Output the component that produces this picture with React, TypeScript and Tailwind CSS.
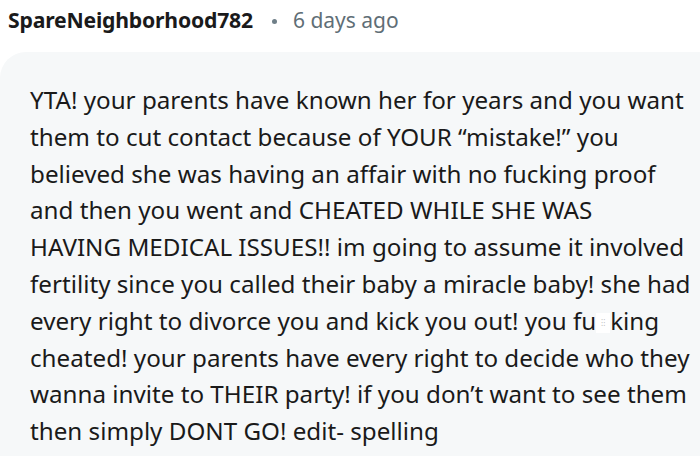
export default function App() {
  const lines = [
    'YTA! your parents have known her for years and you want',
    'them to cut contact because of YOUR \u201cmistake!\u201d you',
    'believed she was having an affair with no fucking proof',
    'and then you went and CHEATED WHILE SHE WAS',
    'HAVING MEDICAL ISSUES!! im going to assume it involved',
    'fertility since you called their baby a miracle baby! she had',
    'every right to divorce you and kick you out! you fu',
    'cheated! your parents have every right to decide who they',
    'wanna invite to THEIR party! if you don\u2019t want to see them',
    'then simply DONT GO! edit- spelling',
  ]

  return (
    <div
      className="w-[700px] h-[456px] overflow-hidden bg-white"
      style={{ fontFamily: '"Noto Sans", "Open Sans", sans-serif' }}
    >
      {/* header */}
      <div className="flex items-center h-[42px] pl-[8px] pb-[2px] leading-[28px]">
        <span className="text-[21.2px] font-bold text-[#1a1a1b] tracking-[-0.2px]">SpareNeighborhood782</span>
        <span className="ml-[19px] mr-[16px] mt-[2px] w-[5px] h-[5px] rounded-full bg-[#6f7f88]" />
        <span className="text-[21px] text-[#5f6e76]">6 days ago</span>
      </div>

      {/* comment body */}
      <div className="mt-[10px] w-[720px] h-[420px] bg-[#f6f8f9] rounded-tl-[26px] pl-[30px] pt-[30px]">
        <div className="text-[24.2px] leading-[36.8px] text-[#1a1a1a]">
          {lines.map((l, i) =>
            i === 6 ? (
              <div key={i} className="whitespace-nowrap">
                {l}
                <span className="inline-block align-middle w-[14px] h-[20px] bg-white text-[8px] leading-[20px] text-[#b8b8b8] text-center">⁝⁝</span>
                king
              </div>
            ) : (
              <div key={i} className="whitespace-nowrap">{l}</div>
            )
          )}
        </div>
      </div>
    </div>
  )
}
